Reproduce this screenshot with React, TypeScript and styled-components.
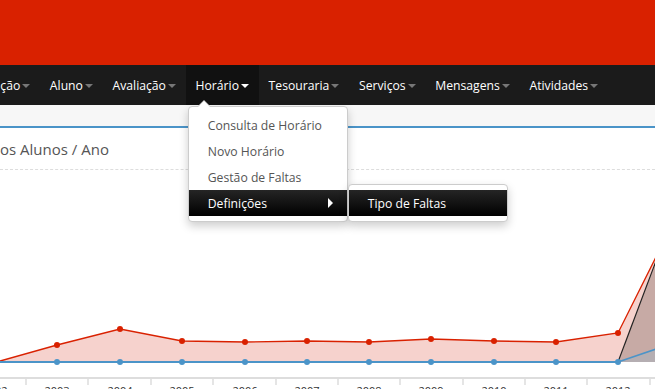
import React from 'react';
import styled, { createGlobalStyle } from 'styled-components';

const GlobalStyle = createGlobalStyle`
  html, body {
    margin: 0;
    padding: 0;
    background: #fff;
    font-family: "Open Sans", "Liberation Sans", sans-serif;
    overflow: hidden;
  }
`;

const Header = styled.div`
  height: 65px;
  background: #d92100;
`;

const NavBar = styled.nav`
  height: 40px;
  background: #1b1b1b;
  position: relative;
  z-index: 10;
`;

const NavList = styled.ul`
  display: flex;
  height: 100%;
  margin: 0 0 0 -9.5px;
  padding: 0;
  list-style: none;
`;

const NavItem = styled.li<{ $active?: boolean }>`
  position: relative;
  display: flex;
  align-items: center;
  padding: 0 9.8px;
  height: 100%;
  font-size: 12.2px;
  color: #fff;
  background: ${(p) => (p.$active ? '#111' : 'transparent')};
  white-space: nowrap;
`;

const Caret = styled.span<{ $active?: boolean }>`
  display: inline-block;
  margin-left: 2px;
  margin-top: 1px;
  width: 0;
  height: 0;
  border-left: 4px solid transparent;
  border-right: 4px solid transparent;
  border-top: 4px solid ${(p) => (p.$active ? '#fff' : '#777')};
`;

const Menu = styled.ul<{ $sub?: boolean }>`
  position: absolute;
  top: ${(p) => (p.$sub ? '-6px' : '41px')};
  left: ${(p) => (p.$sub ? '159px' : '2px')};
  width: 158px;
  margin: 0;
  padding: 5px 0;
  list-style: none;
  background: #fff;
  border: 1px solid #ccc;
  border-radius: 4px;
  box-shadow: 0 4px 10px rgba(0, 0, 0, 0.2);

  ${(p) =>
    !p.$sub &&
    `
    &::before {
      content: '';
      position: absolute;
      top: -7px;
      left: 8px;
      border-left: 7px solid transparent;
      border-right: 7px solid transparent;
      border-bottom: 7px solid #ccc;
    }
    &::after {
      content: '';
      position: absolute;
      top: -6px;
      left: 9px;
      border-left: 6px solid transparent;
      border-right: 6px solid transparent;
      border-bottom: 6px solid #fff;
    }
  `}
`;

const MenuItem = styled.li<{ $active?: boolean }>`
  position: relative;
  display: flex;
  align-items: center;
  justify-content: space-between;
  height: 26px;
  padding: 0 14px 0 19px;
  font-size: 12.2px;
  color: ${(p) => (p.$active ? '#fff' : '#555')};
  background: ${(p) =>
    p.$active ? 'linear-gradient(to bottom, #252525, #000)' : 'transparent'};
`;

const RightCaret = styled.span`
  width: 0;
  height: 0;
  border-top: 5px solid transparent;
  border-bottom: 5px solid transparent;
  border-left: 5px solid #fff;
`;

const Strip = styled.div`
  height: 21px;
  background: #f7f7f7;
  border-bottom: 2px solid #4b94c8;
`;

const Panel = styled.section`
  background: #fff;
`;

const PanelTitle = styled.h3`
  margin: 0;
  height: 41px;
  display: flex;
  align-items: center;
  font-size: 15px;
  font-weight: 400;
  color: #555;
  border-bottom: 1px dashed #ddd;
`;

const ChartBox = styled.div`
  height: 220px;
`;

const Y0 = 170;
const xs = [57, 120, 182, 245, 307, 369, 431, 494, 556, 618];
const reds = [345, 329, 341, 342, 341, 342, 339, 341, 342, 333];
const ticks = [26, 88, 151, 213, 276, 338, 400, 463, 525, 587, 650];
const years = ['2002', '2003', '2004', '2005', '2006', '2007', '2008', '2009', '2010', '2011', '2012'];

function Chart() {
  const y = (v: number) => v - Y0;
  const redPts = [[0, 361], ...xs.map((x, i) => [x, reds[i]]), [662, 245]];
  const redLine = redPts.map(([a, b]) => `${a},${y(b)}`).join(' ');
  const redArea = `0,${y(362)} ${redLine} 662,${y(362)}`;
  return (
    <svg width="655" height="220" viewBox="0 0 655 220">
      <polygon points={redArea} fill="#f6d2cd" />
      <polygon points={`618,${y(362)} 662,${y(245)} 662,${y(362)}`} fill="#c7aaa5" />
      <polygon points={`618,${y(362)} 662,${y(347)} 662,${y(362)}`} fill="#b5aeb2" />
      <polyline points={redLine} fill="none" stroke="#d92100" strokeWidth="1.3" />
      <line x1="618" y1={y(362)} x2="662" y2={y(245)} stroke="#222" strokeWidth="1.2" />
      <line x1="0" y1={y(362)} x2="618" y2={y(362)} stroke="#4b94c8" strokeWidth="2" />
      <line x1="618" y1={y(362)} x2="662" y2={y(347)} stroke="#4b94c8" strokeWidth="1.5" />
      {xs.map((x, i) => (
        <circle key={'r' + x} cx={x} cy={y(reds[i])} r="3" fill="#d92100" />
      ))}
      {xs.map((x) => (
        <circle key={'b' + x} cx={x} cy={y(362)} r="3" fill="#4b94c8" />
      ))}
      <line x1="0" y1={y(378)} x2="655" y2={y(378)} stroke="#ddd" strokeWidth="2" />
      {ticks.map((t) => (
        <line key={t} x1={t} y1={y(378)} x2={t} y2={y(385)} stroke="#ddd" strokeWidth="1.5" />
      ))}
      {[-5, ...xs].map((x, i) => (
        <text
          key={'t' + x}
          x={x}
          y={y(395)}
          textAnchor="middle"
          fontSize="11"
          fill="#333"
          fontFamily="Open Sans, Liberation Sans, sans-serif"
        >
          {years[i]}
        </text>
      ))}
    </svg>
  );
}

const navItems = ['ção', 'Aluno', 'Avaliação', 'Horário', 'Tesouraria', 'Serviços', 'Mensagens', 'Atividades'];

export default function App() {
  return (
    <>
      <GlobalStyle />
      <Header />
      <NavBar>
        <NavList>
          {navItems.map((item) => {
            const active = item === 'Horário';
            return (
              <NavItem key={item} $active={active}>
                {item}
                <Caret $active={active} />
                {active && (
                  <Menu>
                    <MenuItem>Consulta de Horário</MenuItem>
                    <MenuItem>Novo Horário</MenuItem>
                    <MenuItem>Gestão de Faltas</MenuItem>
                    <MenuItem $active>
                      Definições
                      <RightCaret />
                      <Menu $sub>
                        <MenuItem $active>Tipo de Faltas</MenuItem>
                      </Menu>
                    </MenuItem>
                  </Menu>
                )}
              </NavItem>
            );
          })}
        </NavList>
      </NavBar>
      <Strip />
      <Panel>
        <PanelTitle>os Alunos / Ano</PanelTitle>
        <ChartBox>
          <Chart />
        </ChartBox>
      </Panel>
    </>
  );
}
